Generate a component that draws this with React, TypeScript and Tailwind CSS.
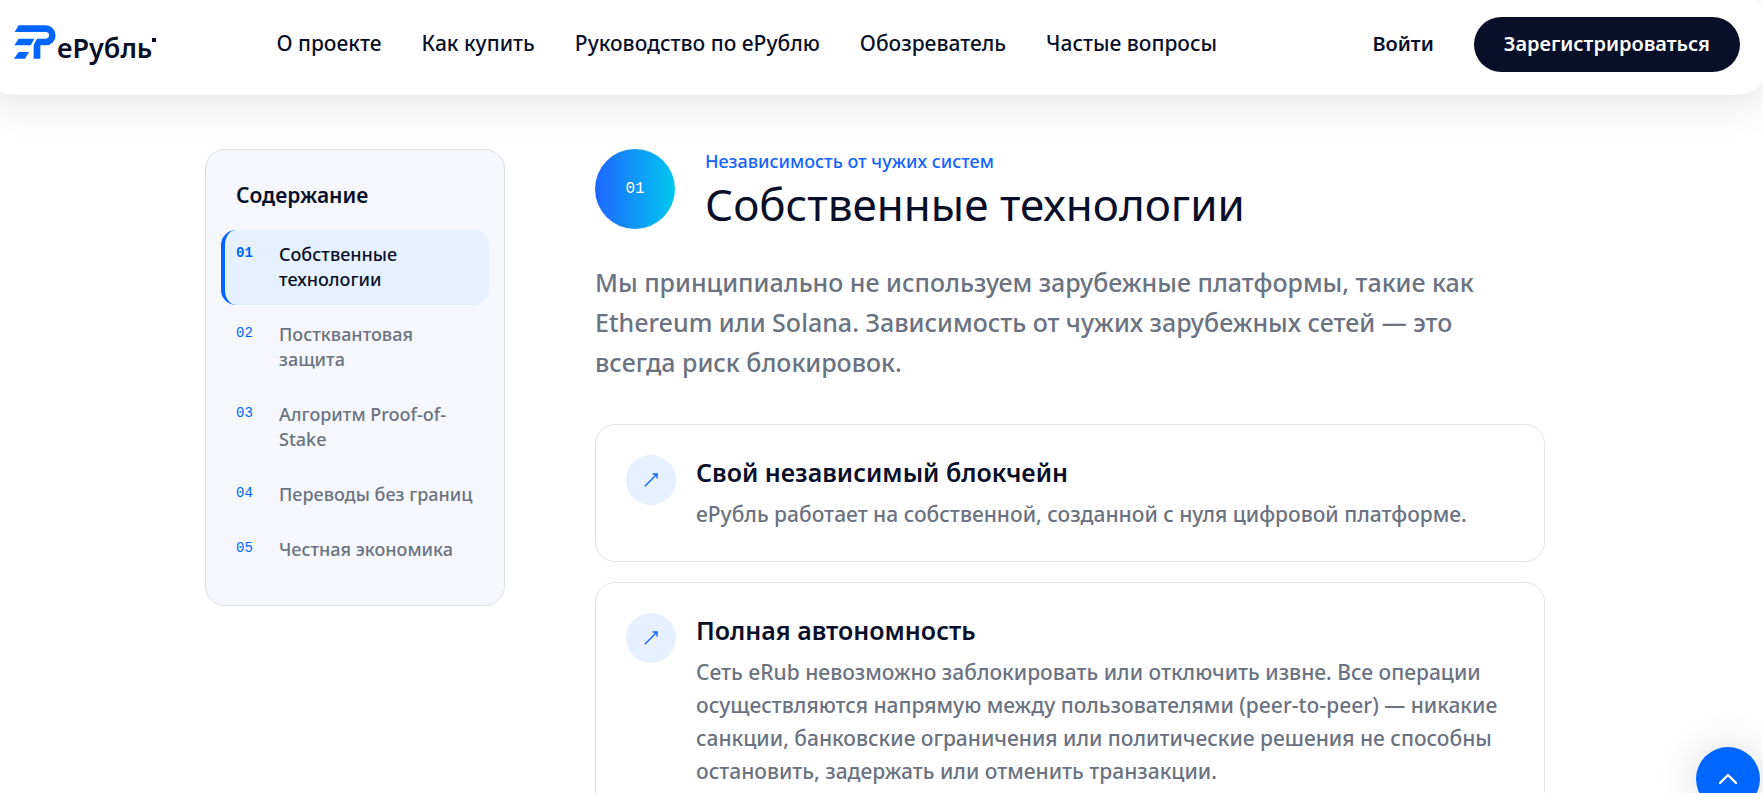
import { ChevronUp } from 'lucide-react';

const navLinks = ['О проекте', 'Как купить', 'Руководство по еРублю', 'Обозреватель', 'Частые вопросы'];

const contents = [
  { id: '01', title: 'Собственные технологии' },
  { id: '02', title: 'Постквантовая защита' },
  { id: '03', title: 'Алгоритм Proof-of-Stake' },
  { id: '04', title: 'Переводы без границ' },
  { id: '05', title: 'Честная экономика' },
];

const cards = [
  {
    title: 'Свой независимый блокчейн',
    text: 'еРубль работает на собственной, созданной с нуля цифровой платформе.',
  },
  {
    title: 'Полная автономность',
    text: 'Сеть eRub невозможно заблокировать или отключить извне. Все операции осуществляются напрямую между пользователями (peer-to-peer) — никакие санкции, банковские ограничения или политические решения не способны остановить, задержать или отменить транзакции.',
  },
];

function Logo() {
  return (
    <a href="#" className="flex items-center">
      <svg className="mb-1" width="42" height="34" viewBox="43 74 126 102" fill="#0066ff" aria-hidden="true">
        <path d="M57 75H138A30 30 0 0 1 138 135H122V175H102V134L112 115H138A10 10 0 0 0 138 95H45Z" />
        <path d="M57 115H104L93 135H44Z" />
        <path d="M57 155H88L76 175H43Z" />
      </svg>
      <span className="pt-2 pl-px text-[27px] leading-8 font-semibold">еРубль</span>
      <span className="mb-2 size-1 bg-[#0a0f29]" />
    </a>
  );
}

function Header() {
  return (
    <header className="-mx-[25px] -mt-[5px] flex h-[100px] items-center rounded-[40px] bg-white pr-[35px] pb-0.5 pl-[39px] shadow-[0_10px_40px_rgba(0,0,0,0.1)]">
      <Logo />
      <nav className="ml-[120px] flex gap-10 text-[21px] font-medium whitespace-nowrap">
        {navLinks.map((link) => (
          <a key={link} href="#">{link}</a>
        ))}
      </nav>
      <div className="ml-auto flex items-center gap-10 text-[20px] font-semibold">
        <a href="#">Войти</a>
        <button className="h-[55px] rounded-full bg-[#0a0f29] px-[30px] text-white">Зарегистрироваться</button>
      </div>
    </header>
  );
}

function Sidebar() {
  return (
    <aside className="w-[300px] shrink-0 rounded-[20px] border border-[#dddfe5] bg-[#f5f7fc] px-[15px] py-[30px]">
      <h2 className="mb-5 px-[15px] text-[21px] leading-[30px] font-semibold">Содержание</h2>
      <nav className="flex flex-col gap-[5px]">
        {contents.map((item, i) => (
          <a
            key={item.id}
            href={`#${item.id}`}
            className={`flex gap-[15px] rounded-[15px] border-l-4 pt-3 pr-[10px] pb-[13px] pl-[11px] ${
              i === 0 ? 'border-[#0066ff] bg-[#e6f0ff]' : 'border-transparent text-[#6b7280]'
            }`}
          >
            <span
              className={`w-7 shrink-0 font-['Liberation_Mono',monospace] text-[14px] leading-[22px] text-[#0066ff] ${
                i === 0 ? 'font-bold' : ''
              }`}
            >
              {item.id}
            </span>
            <span className="text-[18px] leading-[25px] font-medium">{item.title}</span>
          </a>
        ))}
      </nav>
    </aside>
  );
}

function Card({ title, text }: { title: string; text: string }) {
  return (
    <li className="flex gap-5 rounded-[20px] border border-[#e5e5e7] p-[30px]">
      <span className="flex size-[50px] shrink-0 items-center justify-center rounded-full bg-[#e6f0ff]">
        <svg width="14" height="14" viewBox="0 0 14 14" fill="none" stroke="#1463ff" strokeWidth="1.4" aria-hidden="true">
          <path d="M0.8 13.2 13 1M8.6 1H13V5.4" />
        </svg>
      </span>
      <div>
        <h3 className="mb-2 text-[25px] leading-[35px] font-semibold">{title}</h3>
        <p className="text-[21px] leading-[33px] font-medium text-[#6b7280]">{text}</p>
      </div>
    </li>
  );
}

export default function App() {
  return (
    <div className="min-h-screen overflow-x-hidden bg-white pr-[13px] font-['Noto_Sans',sans-serif] text-[#0a0f29]">
      <Header />
      <main className="mx-auto flex max-w-[1340px] items-start gap-[90px] pt-[54px] pb-10">
        <Sidebar />
        <section className="min-w-0 flex-1">
          <div className="mb-[30px] flex gap-[30px]">
            <div className="flex size-20 shrink-0 items-center justify-center rounded-full bg-linear-to-r/srgb from-[#1f66ff] to-[#00c8f0] font-['Liberation_Mono',monospace] text-[16px] text-white">
              01
            </div>
            <div>
              <p className="text-[18px] leading-[25px] font-medium text-[#1463ff]">Независимость от чужих систем</p>
              <h1 className="mt-[3px] text-[44px] leading-[55px]">Собственные технологии</h1>
            </div>
          </div>
          <p className="mb-[42px] pr-5 text-[25px] leading-10 font-medium text-[#6b7280]">
            Мы принципиально не используем зарубежные платформы, такие как Ethereum или Solana. Зависимость от чужих зарубежных сетей — это всегда риск блокировок.
          </p>
          <ul className="flex flex-col gap-5">
            {cards.map((card) => (
              <Card key={card.title} {...card} />
            ))}
          </ul>
        </section>
      </main>
      <button
        aria-label="Наверх"
        className="fixed right-[3px] -bottom-[18px] flex size-16 items-center justify-center rounded-full bg-[#0066ff] text-white shadow-[0_0_40px_rgba(0,0,0,0.15)]"
      >
        <ChevronUp size={32} strokeWidth={1.8} />
      </button>
    </div>
  );
}
